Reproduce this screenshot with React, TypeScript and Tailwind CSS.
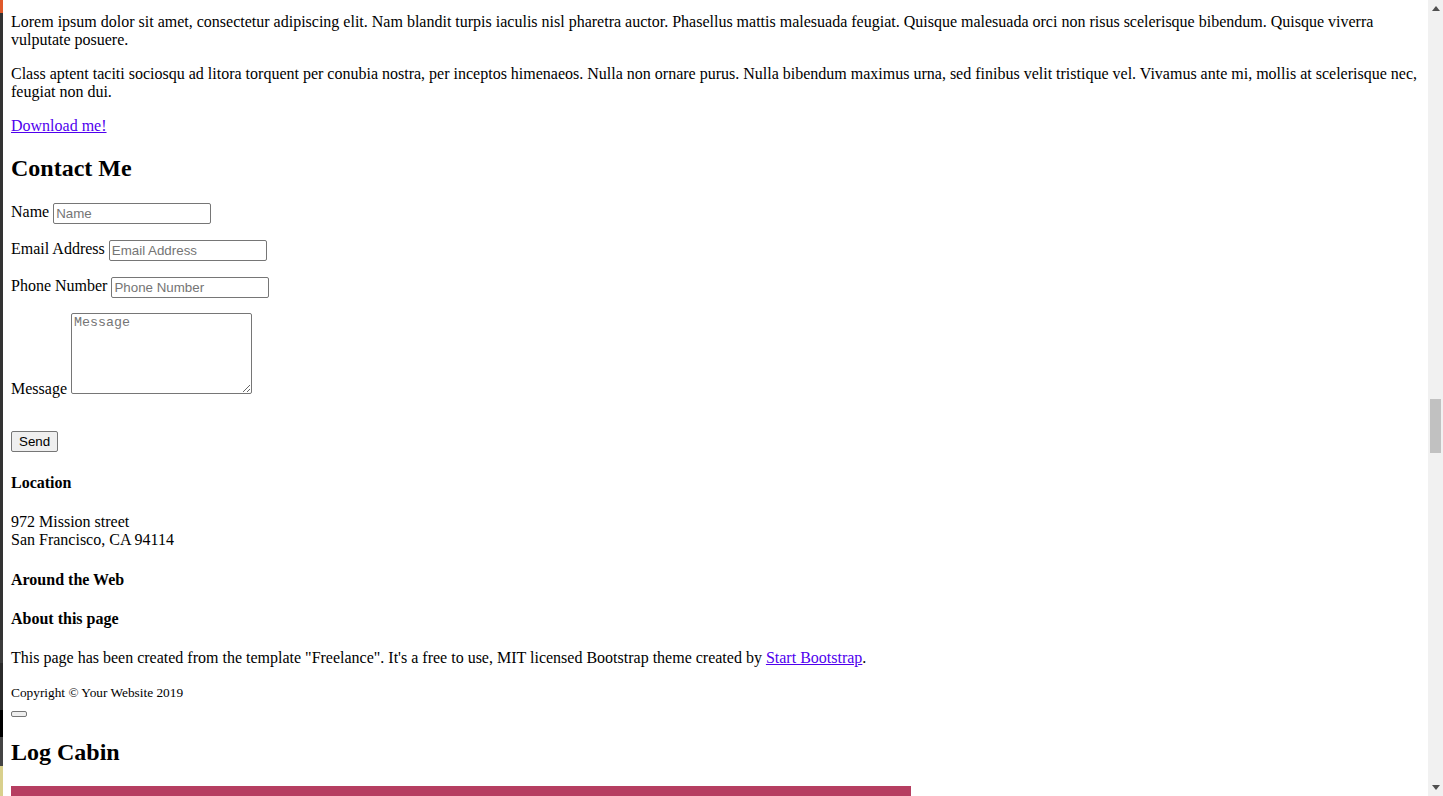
import React from 'react';

const serif = "font-['Liberation_Serif',serif]";
const sans = "font-['Liberation_Sans',Arial,sans-serif]";

function Field({ label, placeholder, width }: { label: string; placeholder: string; width: string }) {
  return (
    <div className="mb-[16px] h-[21px] leading-[21px]">
      {label}{' '}
      <input
        type="text"
        placeholder={placeholder}
        className={`${sans} ${width} h-[21px] align-middle rounded-[2px] border border-[#767676] px-[2px] text-[13.33px] text-black placeholder:text-[#757575] outline-none`}
      />
    </div>
  );
}

export default function App() {
  return (
    <div className={`${serif} flex h-[796px] w-[1443px] overflow-hidden bg-white text-[16px] leading-[normal] text-black`}>
      {/* sliver of the page behind, on the left edge */}
      <div className="flex w-[3px] flex-none flex-col">
        <div className="h-[13px] bg-[#e0592a]" />
        <div className="h-[627px] bg-[#333333]" />
        <div className="h-[23px] bg-[#3c3c3c]" />
        <div className="h-[47px] bg-[#2b2b2b]" />
        <div className="h-[27px] bg-black" />
        <div className="h-[29px] bg-[#444444]" />
        <div className="flex-1 bg-[#d9d08c]" />
      </div>

      <div className="flex-1 px-[8px] pt-[13px]">
        <p>
          Lorem ipsum dolor sit amet, consectetur adipiscing elit. Nam blandit turpis iaculis nisl pharetra auctor. Phasellus mattis malesuada feugiat. Quisque malesuada orci non risus scelerisque bibendum. Quisque viverra vulputate posuere.
        </p>
        <p className="mt-[16px]">
          Class aptent taciti sociosqu ad litora torquent per conubia nostra, per inceptos himenaeos. Nulla non ornare purus. Nulla bibendum maximus urna, sed finibus velit tristique vel. Vivamus ante mi, mollis at scelerisque nec, feugiat non dui.
        </p>
        <p className="mt-[16px]">
          <a href="#" className="text-[#5000ee] underline">Download me!</a>
        </p>

        <h2 className="mt-[20px] mb-[19px] text-[24px] font-bold">Contact Me</h2>

        <form onSubmit={(e) => e.preventDefault()}>
          <Field label="Name" placeholder="Name" width="w-[158px]" />
          <Field label="Email Address" placeholder="Email Address" width="w-[158px]" />
          <Field label="Phone Number" placeholder="Phone Number" width="w-[158px]" />
          <div className="pt-[1px]">
            Message{' '}
            <textarea
              placeholder="Message"
              className="inline-block h-[81px] w-[181px] resize rounded-[2px] border border-[#767676] px-[2px] py-[1px] align-baseline font-mono text-[13.33px] placeholder:text-[#757575] outline-none"
            />
          </div>
          <div className="mt-[33px]">
            <button
              type="submit"
              className={`${sans} h-[21px] rounded-[2px] border border-[#767676] bg-[#efefef] px-[7px] text-[13.33px] leading-[17px] text-black`}
            >
              Send
            </button>
          </div>
        </form>

        <h4 className="mt-[22px] font-bold">Location</h4>
        <p className="mt-[21px]">
          972 Mission street
          <br />
          San Francisco, CA 94114
        </p>
        <h4 className="mt-[22px] font-bold">Around the Web</h4>
        <h4 className="mt-[21px] font-bold">About this page</h4>
        <p className="mt-[21px]">
          This page has been created from the template "Freelance". It's a free to use, MIT licensed Bootstrap theme created by{' '}
          <a href="#" className="text-[#5000ee] underline">Start Bootstrap</a>.
        </p>
        <p className="mt-[18px] text-[13.33px]">Copyright © Your Website 2019</p>
        <div className="mt-[10px] h-[6px]">
          <button type="button" className="block h-[6px] w-[16px] rounded-[2px] border border-[#767676] bg-[#efefef]" />
        </div>
        <h2 className="mt-[22px] text-[24px] font-bold">Log Cabin</h2>
        <div className="mt-[20px] h-[60px] w-[900px] bg-[#b63e61]" />
      </div>

      {/* scrollbar */}
      <div className="relative flex w-[15px] flex-none flex-col items-center bg-[#f1f1f1]">
        <svg width="8" height="5" viewBox="0 0 8 5" className="mt-[6px]">
          <path d="M0 5 L4 0 L8 5 Z" fill="#505050" />
        </svg>
        <div className="mt-[388px] h-[54px] w-[11px] bg-[#c1c1c1]" />
        <div className="flex-1" />
        <svg width="8" height="5" viewBox="0 0 8 5" className="mb-[6px]">
          <path d="M0 0 L8 0 L4 5 Z" fill="#505050" />
        </svg>
      </div>
    </div>
  );
}
